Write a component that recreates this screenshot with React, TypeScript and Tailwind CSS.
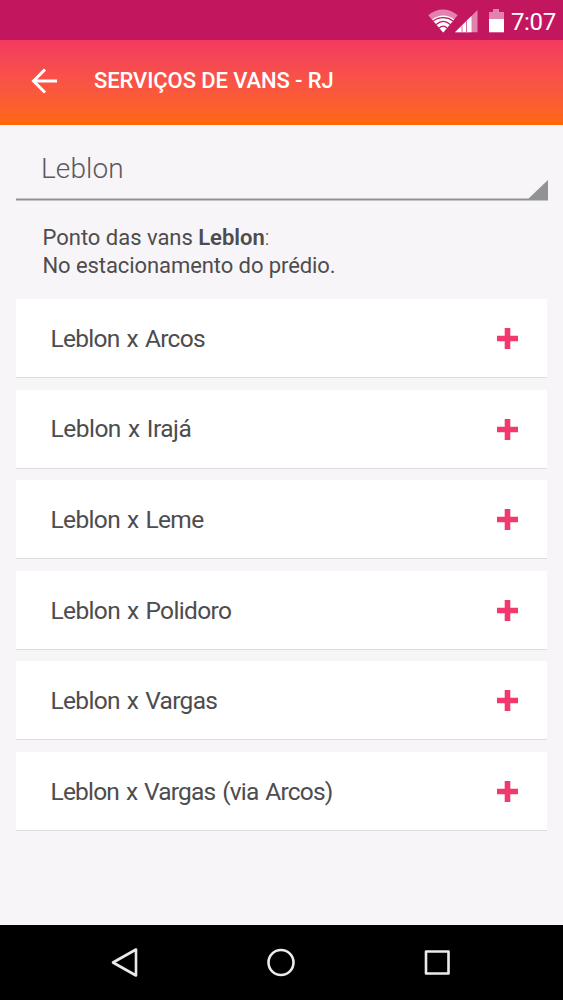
const routes = [
  { name: "Leblon x Arcos", tracking: "tracking-[-0.7px]" },
  { name: "Leblon x Irajá", tracking: "tracking-[-0.5px]" },
  { name: "Leblon x Leme", tracking: "tracking-[-0.64px]" },
  { name: "Leblon x Polidoro", tracking: "tracking-[-0.64px]" },
  { name: "Leblon x Vargas", tracking: "tracking-[-0.67px]" },
  { name: "Leblon x Vargas (via Arcos)", tracking: "tracking-[-0.8px]" },
];

function StatusBar() {
  return (
    <div className="flex h-10 items-center justify-end bg-[#c2165f] pr-[7px] text-white">
      <svg width="84" height="40" viewBox="0 0 84 40" fill="none">
        <g transform="translate(-0.8 0)">
          <path d="M1 15.300C10 7.500 21.500 7.500 30.500 15.300L16 32.500Z" fill="#e183ae" />
          <path d="M5 19.500C11.500 14.300 20.500 14.300 27 19.500L16 32.500Z" fill="#fff" />
          <path d="M6 21C12 16.500 20 16.500 26 21M9 24.500C13.500 20.600 18.500 20.600 23 24.500M12 28C14.500 25.700 17.500 25.700 20 28" stroke="#c2165f" strokeWidth="1.200" />
        </g>
        <path d="M27 32.300L49.500 10V32.300Z" fill="#e183ae" />
        <path d="M27 32.300L43.500 16V32.300Z" fill="#fff" />
        <path d="M34 25.500V32M38.500 21V32" stroke="#dc70a0" strokeWidth="1" />
        <path d="M61 12H65V9H71V12H76V19H61Z" fill="#e183ae" />
        <path d="M61 19H76V32.300H61Z" fill="#fff" />
      </svg>
      <span className="-ml-px mt-1 text-[24px] leading-none tracking-[-0.3px]">7:07</span>
    </div>
  );
}

function Header() {
  return (
    <header className="flex h-[85px] items-center bg-linear-to-b from-[#f33a60] to-[#ff6804] pb-[3px] pl-[31px] text-white">
      <svg width="27" height="26" viewBox="0 0 27 26" fill="none" stroke="currentColor" strokeWidth="3">
        <path d="M14 1.500L2.500 13L14 24.500M2.500 13H26" />
      </svg>
      <h1 className="ml-9 whitespace-nowrap text-[22px] font-medium leading-none tracking-[-0.100px]">
        SERVIÇOS DE VANS - RJ
      </h1>
    </header>
  );
}

function Plus() {
  return (
    <svg width="21" height="22" viewBox="0 0 21 22" fill="#f3386e">
      <path d="M7.700 1H13.300V8.700H21V14.300H13.300V22H7.700V14.300H0V8.700H7.700Z" />
    </svg>
  );
}

export default function App() {
  return (
    <div className="flex h-[1000px] w-[563px] flex-col overflow-hidden bg-[#f7f5f8] font-['Roboto',sans-serif] text-[#4d4c4e]">
      <StatusBar />
      <Header />
      <main className="flex flex-1 flex-col pl-4 pr-[15px]">
        <button className="relative flex h-[76px] items-center pl-[25px] pt-[12px] text-left text-[28px] font-light leading-none tracking-[0.100px] text-[#5a595b]">
          Leblon
          <svg className="absolute bottom-0 left-0" width="532" height="22" viewBox="0 0 532 22" fill="#929194">
            <path d="M0 19.500H512.500L532 1V21.500H0Z" />
          </svg>
        </button>
        <p className="mt-[22.500px] h-[75.500px] whitespace-nowrap pl-[26.500px] text-[22px] leading-[28px]">
          <span className="tracking-[-0.020px]">Ponto das vans <b className="font-semibold">Leblon</b><span className="font-light">:</span></span>
          <br />
          <span className="tracking-[-0.080px]">No estacionamento do prédio.</span>
        </p>
        <ul className="flex flex-col gap-[12.600px] pr-px">
          {routes.map((route) => (
            <li key={route.name} className="flex h-[78px] items-center justify-between bg-white pl-[34.500px] pr-[29px] shadow-[0_1px_0_#dddcde]">
              <span className={`whitespace-nowrap pt-[2px] text-[24.5px] leading-none [word-spacing:1.5px] ${route.tracking}`}>{route.name}</span>
              <Plus />
            </li>
          ))}
        </ul>
      </main>
      <nav className="flex h-[75px] items-center bg-black">
        <svg width="563" height="75" viewBox="0 0 563 75" fill="none" stroke="#eceaec" strokeWidth="2.600" strokeLinejoin="round">
          <path d="M113 37.500L136 24.500V50.500Z" />
          <circle cx="281" cy="37.500" r="12.500" />
          <rect x="426" y="26.500" width="22.500" height="22" />
        </svg>
      </nav>
    </div>
  );
}
